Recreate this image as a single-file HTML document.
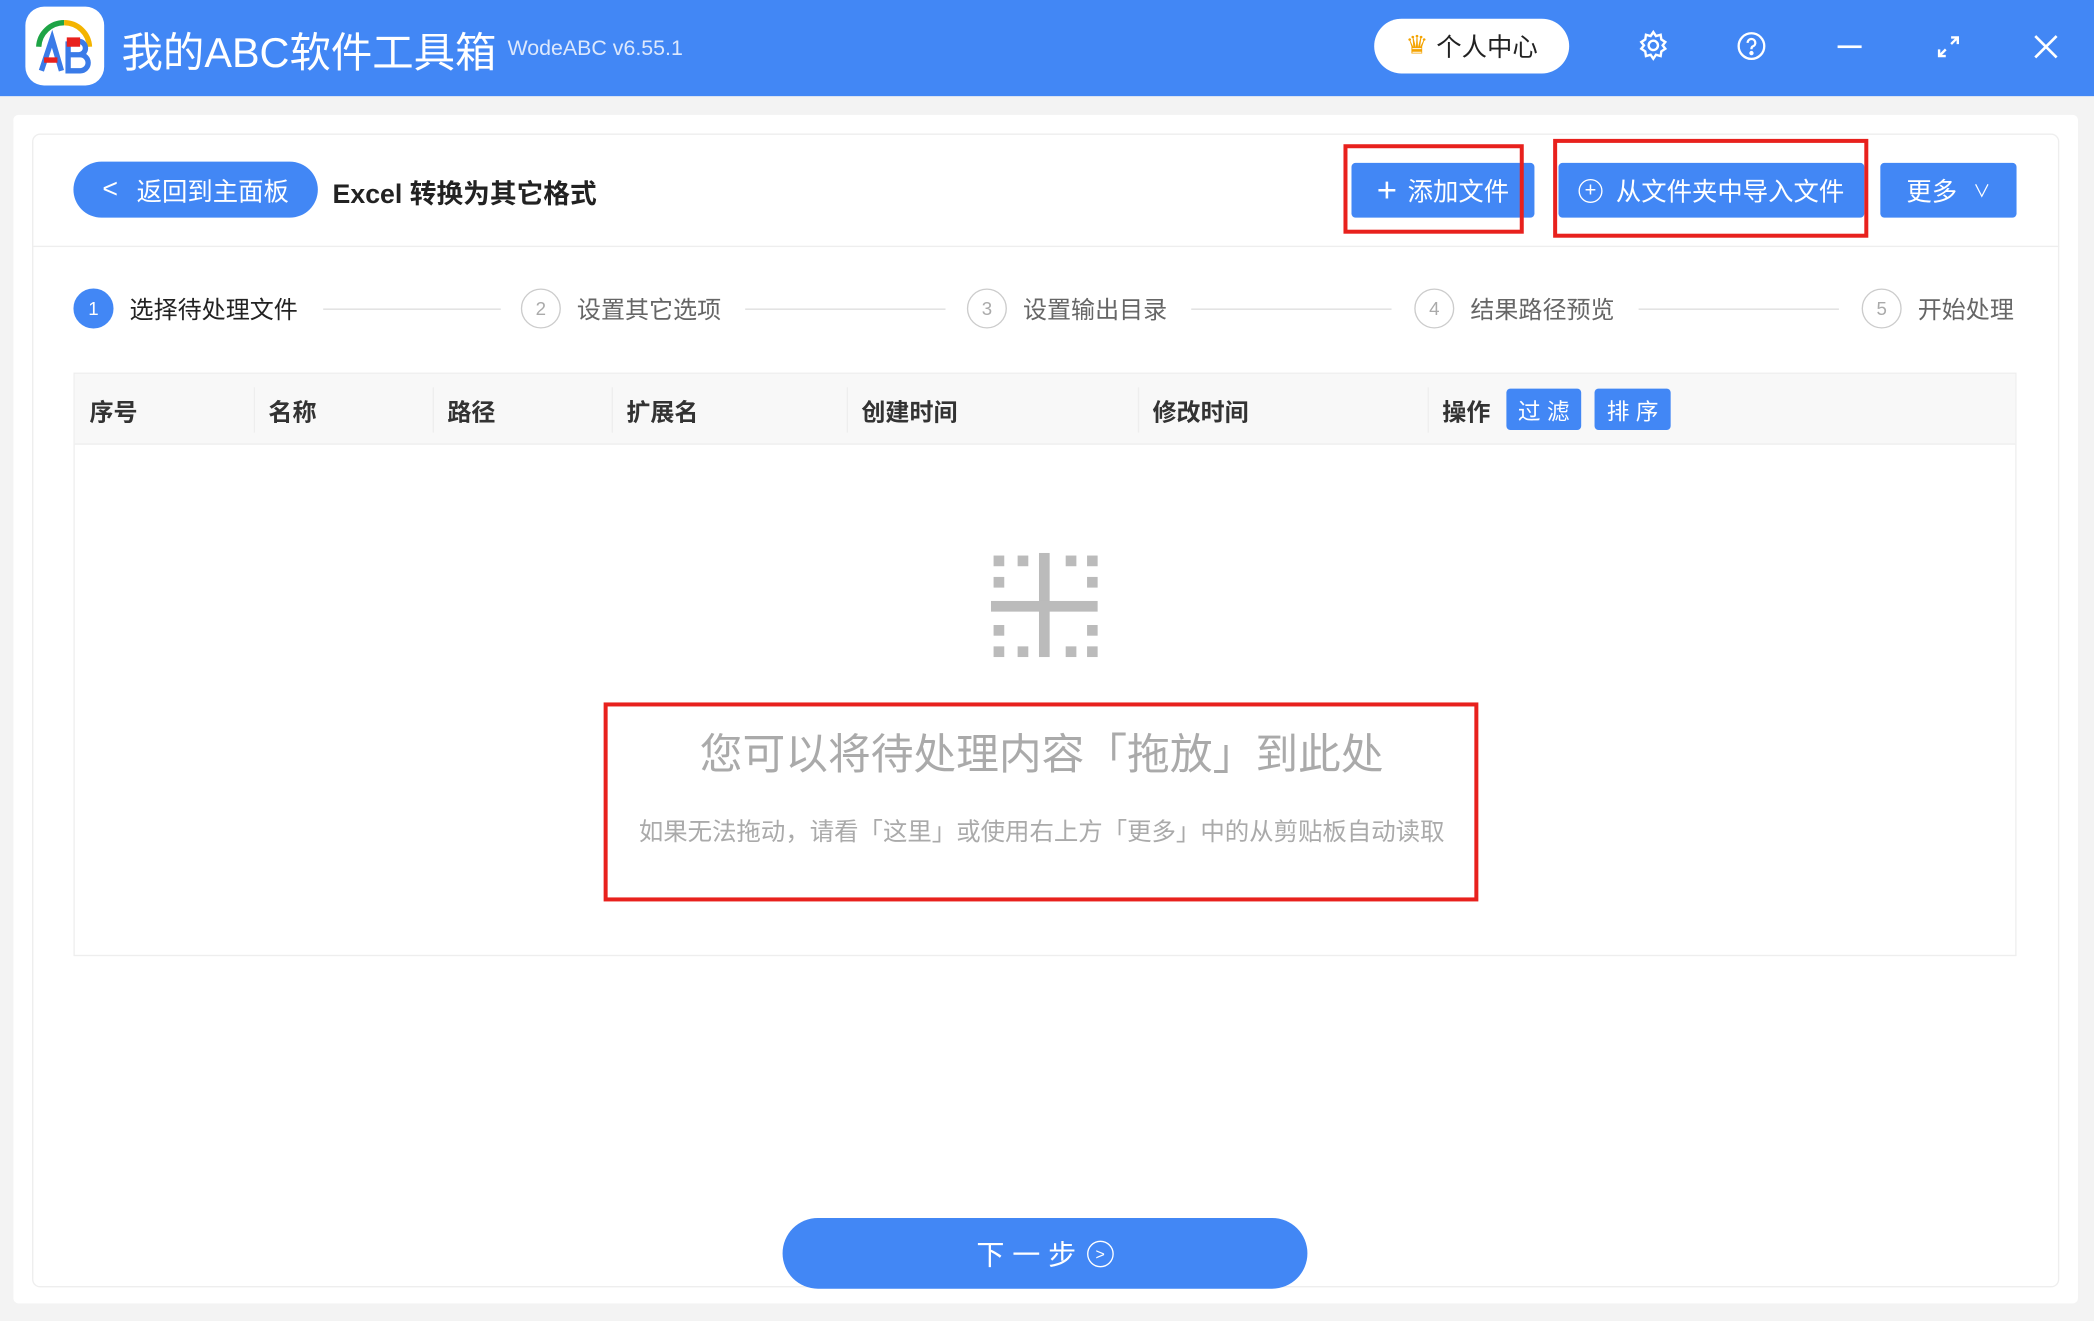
<!DOCTYPE html>
<html><head><meta charset="utf-8"><style>
*{margin:0;padding:0;box-sizing:border-box}
html,body{width:2094px;height:1321px;overflow:hidden;background:#f3f3f3}
#w{width:1568px;height:990px;transform:scale(1.33546);transform-origin:0 0;position:relative;font-family:"Liberation Sans","Noto Sans CJK SC",sans-serif;background:#f3f3f3}
.a{position:absolute}
.top{left:0;top:0;width:1568px;height:72px;background:#4287f5}
.btn{background:#4287f5;color:#fff;border-radius:3px;display:flex;align-items:center;justify-content:center;font-size:19px}
.red{border:3px solid #e8211d}
.step{font-size:18px;color:#666;display:flex;align-items:center}
.circ{width:30px;height:30px;border-radius:50%;border:1px solid #ccc;color:#aaa;font-size:14px;display:flex;align-items:center;justify-content:center;margin-right:12px}
.line{height:1px;background:#ddd}
.th{font-size:18px;font-weight:bold;color:#333;top:295px}
</style></head><body><div id="w">
<div class="a top"></div>
<div class="a" style="left:19px;top:5px;width:59px;height:59px;background:#fff;border-radius:14px"></div>
<svg class="a" style="left:19px;top:5px" width="59" height="59" viewBox="0 0 59 59">
<path d="M10 30 A19 19 0 0 1 29 12" stroke="#1ea446" stroke-width="4" fill="none"/>
<path d="M29 12 A19 19 0 0 1 48 30" stroke="#f4b400" stroke-width="4" fill="none"/>
<path d="M12 48 L20 24 L27 48" stroke="#3a7be8" stroke-width="4" fill="none"/>
<path d="M14 40 H24" stroke="#e8211d" stroke-width="4"/>
<path d="M32 26 H40 a5 5 0 0 1 0 10 H32 V26 M32 36 H41 a6 6 0 0 1 0 12 H32 Z" stroke="#3a7be8" stroke-width="4" fill="none"/>
<rect x="31" y="23" width="10" height="7" fill="#e8211d"/>
</svg>
<div class="a" style="left:91px;top:14px;color:#fff;font-size:31px">我的ABC软件工具箱</div>
<div class="a" style="left:380px;top:28px;color:#dce8fd;font-size:16px">WodeABC v6.55.1</div>
<div class="a" style="left:1029px;top:14px;width:146px;height:41px;background:#fff;border-radius:21px;display:flex;align-items:center;justify-content:center;font-size:19px;color:#222"><span style="color:#f4a300;margin-right:6px">♛</span>个人中心</div>
<svg class="a" style="left:1226px;top:22px" width="24" height="24" viewBox="0 0 24 24" fill="none" stroke="#fff" stroke-width="1.8"><circle cx="12" cy="12" r="3.5"/><path d="M12 2l2 3 3.5-1 .5 3.5 3 2-2 2.5 2 2.5-3 2-.5 3.5-3.5-1-2 3-2-3-3.5 1-.5-3.5-3-2 2-2.5-2-2.5 3-2 .5-3.5 3.5 1z"/></svg>
<svg class="a" style="left:1300px;top:23px" width="23" height="23" viewBox="0 0 24 24" fill="none" stroke="#fff" stroke-width="1.8"><circle cx="12" cy="12" r="10"/><path d="M9 9.5a3 3 0 1 1 4 2.8c-1 .4-1 1.2-1 2.2"/><circle cx="12" cy="17.5" r=".8" fill="#fff"/></svg>
<div class="a" style="left:1376px;top:34px;width:18px;height:2px;background:#fff"></div>
<svg class="a" style="left:1449px;top:25px" width="20" height="20" viewBox="0 0 20 20" stroke="#fff" stroke-width="1.8" fill="none"><path d="M3 17L8 12M12 8L17 3M3 12v5h5M12 3h5v5"/></svg>
<svg class="a" style="left:1522px;top:25px" width="20" height="20" viewBox="0 0 20 20" stroke="#fff" stroke-width="2"><path d="M2 2L18 18M18 2L2 18"/></svg>

<div class="a" style="left:10px;top:86px;width:1546px;height:890px;background:#fff;border-radius:4px"></div>
<div class="a" style="left:24px;top:100px;width:1518px;height:864px;border:1px solid #eee;border-radius:6px"></div>
<div class="a" style="left:24px;top:184px;width:1518px;height:1px;background:#eee"></div>
<div class="a btn" style="left:55px;top:121px;width:183px;height:42px;border-radius:21px"><span style="margin-right:14px;font-size:20px">&lt;</span>返回到主面板</div>
<div class="a" style="left:249px;top:129px;font-size:20px;font-weight:bold;color:#222">Excel 转换为其它格式</div>
<div class="a btn" style="left:1012px;top:122px;width:137px;height:41px"><span style="font-size:26px;margin-right:8px;font-weight:300">+</span>添加文件</div>
<div class="a red" style="left:1006px;top:108px;width:135px;height:67px"></div>
<div class="a btn" style="left:1167px;top:122px;width:229px;height:41px"><span style="display:inline-flex;width:18px;height:18px;border:1.5px solid #fff;border-radius:50%;align-items:center;justify-content:center;font-size:15px;margin-right:10px">+</span>从文件夹中导入文件</div>
<div class="a red" style="left:1163px;top:104px;width:236px;height:74px"></div>
<div class="a btn" style="left:1408px;top:122px;width:102px;height:41px">更多<span style="margin-left:12px;font-size:13px">∨</span></div>

<div class="a step" style="left:55px;top:216px"><div class="circ" style="background:#4287f5;border-color:#4287f5;color:#fff">1</div><span style="color:#222">选择待处理文件</span></div>
<div class="a line" style="left:242px;top:231px;width:133px"></div>
<div class="a step" style="left:390px;top:216px"><div class="circ">2</div>设置其它选项</div>
<div class="a line" style="left:558px;top:231px;width:150px"></div>
<div class="a step" style="left:724px;top:216px"><div class="circ">3</div>设置输出目录</div>
<div class="a line" style="left:892px;top:231px;width:150px"></div>
<div class="a step" style="left:1059px;top:216px"><div class="circ">4</div>结果路径预览</div>
<div class="a line" style="left:1227px;top:231px;width:150px"></div>
<div class="a step" style="left:1394px;top:216px"><div class="circ">5</div>开始处理</div>

<div class="a" style="left:55px;top:279px;width:1455px;height:437px;border:1px solid #eee"></div>
<div class="a" style="left:56px;top:280px;width:1453px;height:53px;background:#f8f8f8;border-bottom:1px solid #eee"></div>
<div class="a th" style="left:67px">序号</div>
<div class="a th" style="left:201px">名称</div>
<div class="a th" style="left:335px">路径</div>
<div class="a th" style="left:469px">扩展名</div>
<div class="a th" style="left:645px">创建时间</div>
<div class="a th" style="left:863px">修改时间</div>
<div class="a th" style="left:1080px">操作</div>
<div class="a" style="left:190px;top:290px;width:1px;height:34px;background:#eee"></div>
<div class="a" style="left:324px;top:290px;width:1px;height:34px;background:#eee"></div>
<div class="a" style="left:458px;top:290px;width:1px;height:34px;background:#eee"></div>
<div class="a" style="left:634px;top:290px;width:1px;height:34px;background:#eee"></div>
<div class="a" style="left:852px;top:290px;width:1px;height:34px;background:#eee"></div>
<div class="a" style="left:1069px;top:290px;width:1px;height:34px;background:#eee"></div>
<div class="a btn" style="left:1128px;top:291px;width:56px;height:31px;font-size:17px">过 滤</div>
<div class="a btn" style="left:1194px;top:291px;width:57px;height:31px;font-size:17px">排 序</div>

<svg class="a" style="left:742px;top:414px" width="80" height="80" viewBox="0 0 80 80" fill="#bbb">
<rect x="36" y="0" width="8" height="78"/><rect x="0" y="36" width="80" height="8"/>
<rect x="2" y="2" width="8" height="8"/><rect x="20" y="2" width="8" height="8"/><rect x="56" y="2" width="8" height="8"/><rect x="72" y="2" width="8" height="8"/>
<rect x="2" y="18" width="8" height="8"/><rect x="72" y="18" width="8" height="8"/>
<rect x="2" y="54" width="8" height="8"/><rect x="72" y="54" width="8" height="8"/>
<rect x="2" y="70" width="8" height="8"/><rect x="20" y="70" width="8" height="8"/><rect x="56" y="70" width="8" height="8"/><rect x="72" y="70" width="8" height="8"/>
</svg>
<div class="a" style="left:455px;top:540px;width:650px;text-align:center;font-size:32px;color:#aaa">您可以将待处理内容「拖放」到此处</div>
<div class="a" style="left:455px;top:609px;width:650px;text-align:center;font-size:18.3px;color:#aaa">如果无法拖动，请看「这里」或使用右上方「更多」中的从剪贴板自动读取</div>
<div class="a red" style="left:452px;top:526px;width:655px;height:149px"></div>

<div class="a btn" style="left:586px;top:912px;width:393px;height:53px;border-radius:27px;font-size:21px">下 一 步<span style="display:inline-flex;width:20px;height:20px;border:1.5px solid #fff;border-radius:50%;align-items:center;justify-content:center;font-size:12px;margin-left:8px">&gt;</span></div>
</div></body></html>
